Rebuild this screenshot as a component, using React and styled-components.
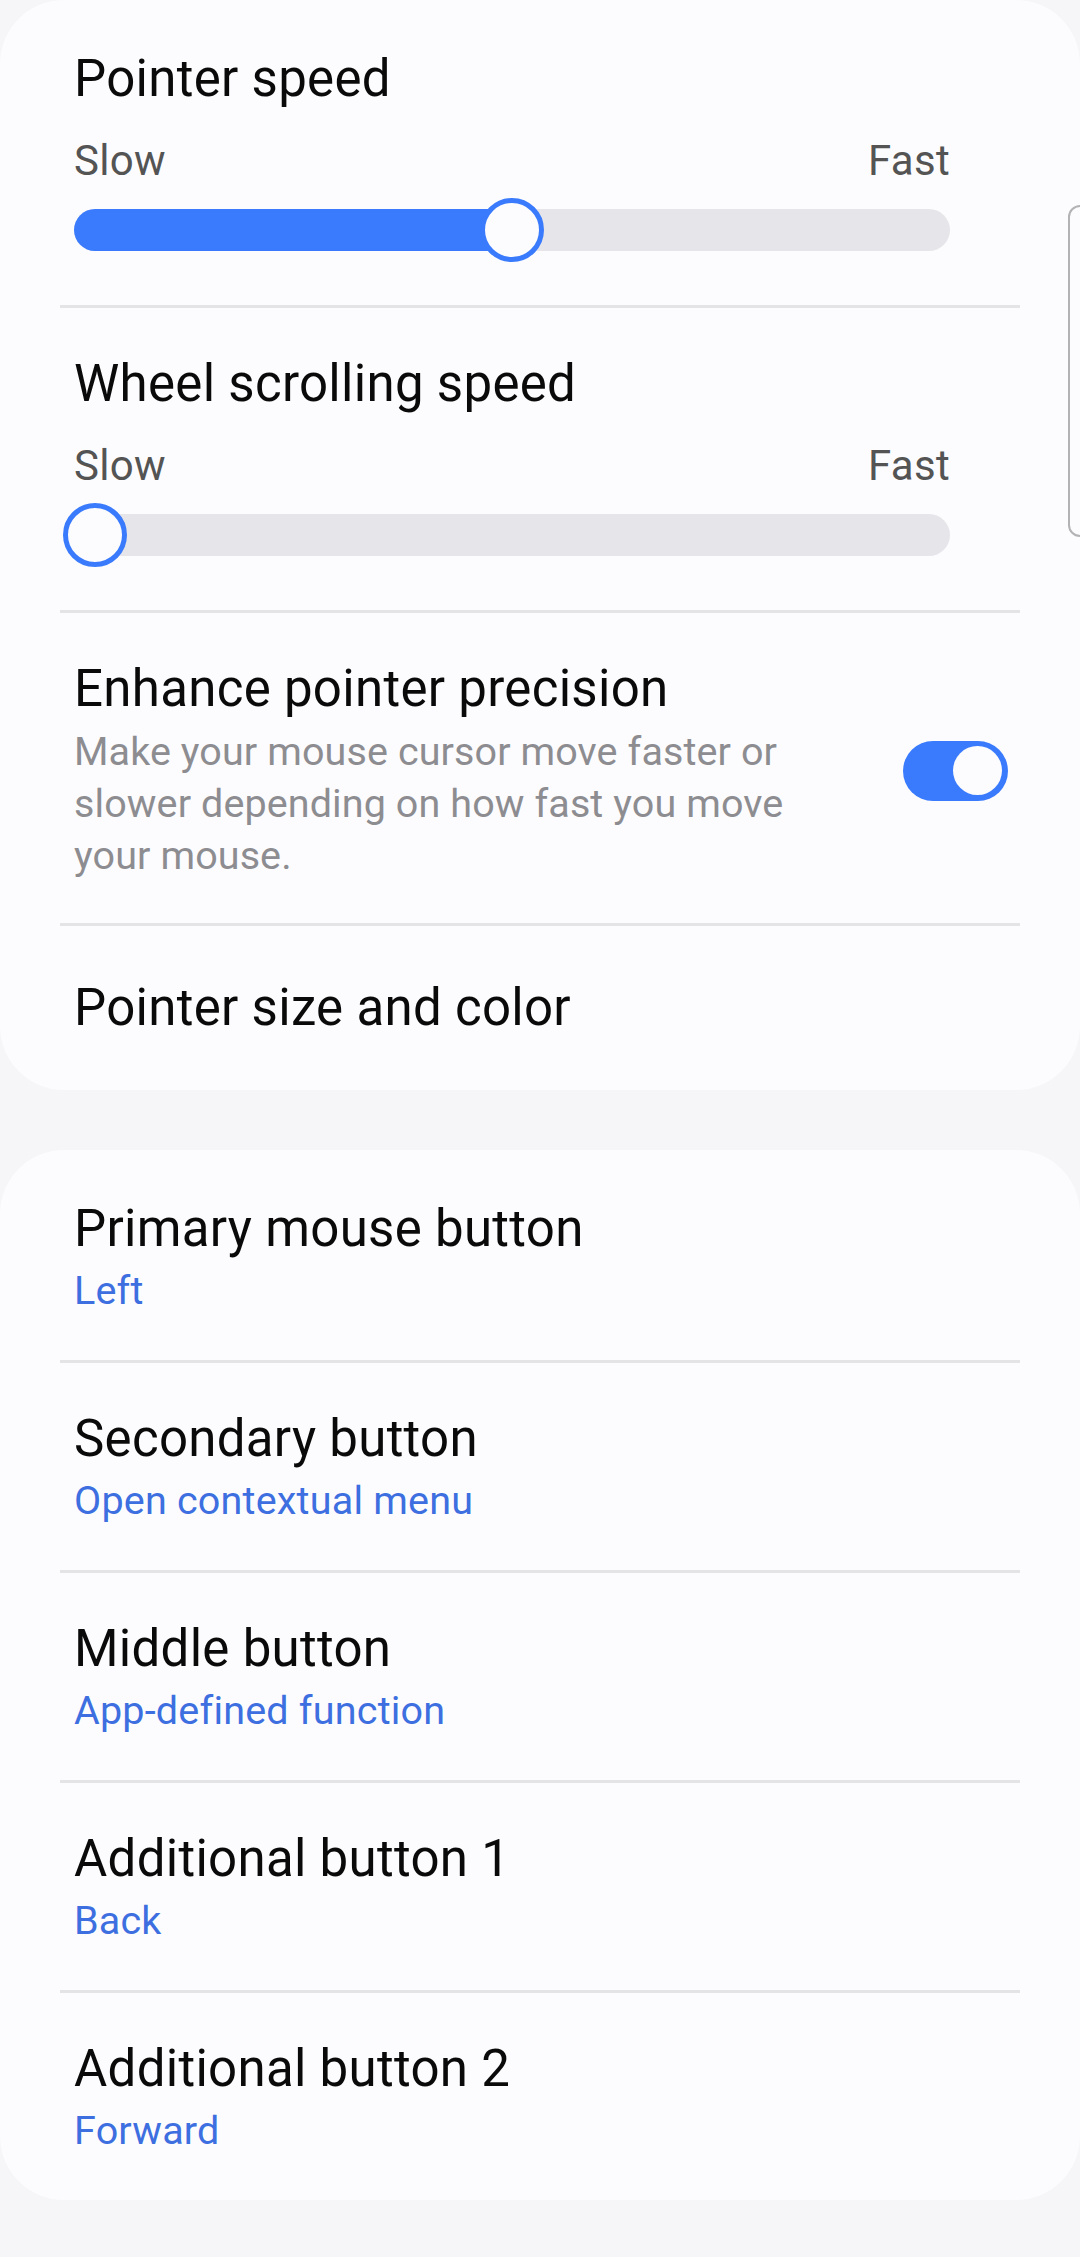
import React from "react";
import styled, { createGlobalStyle } from "styled-components";

const GlobalStyle = createGlobalStyle`
  html, body {
    margin: 0;
    padding: 0;
    background: #f6f6f8;
  }
  body {
    font-family: Roboto, "Noto Sans", "Liberation Sans", sans-serif;
    -webkit-font-smoothing: antialiased;
  }
`;

const Page = styled.div`
  position: relative;
  width: 1080px;
  min-height: 2257px;
  background: #f6f6f8;
  display: flex;
  flex-direction: column;
  gap: 60px;
  padding-bottom: 60px;
  box-sizing: border-box;
`;

const Card = styled.section`
  background: #fcfcfe;
  border-radius: 64px;
  padding: 3px 60px 0;
  display: flex;
  flex-direction: column;
`;

const Divider = styled.div`
  height: 3px;
  background: #e4e4e7;
`;

const Title = styled.div`
  font-size: 51px;
  line-height: 60px;
  color: #0a0a0a;
  letter-spacing: 0.3px;
`;

const SliderSection = styled.div`
  display: flex;
  flex-direction: column;
  padding: 46px 70px 43px 14px;
`;

const Labels = styled.div`
  display: flex;
  justify-content: space-between;
  margin-top: 27px;
  font-size: 42px;
  line-height: 50px;
  color: #545454;
  letter-spacing: 0.3px;
`;

const SliderBox = styled.div`
  margin-top: 12px;
  height: 64px;
  display: flex;
  align-items: center;
`;

const Track = styled.div`
  position: relative;
  flex: 1;
  height: 42px;
  border-radius: 21px;
  background: #e6e6ea;
`;

const Fill = styled.div`
  height: 100%;
  border-radius: 21px 0 0 21px;
  background: #3a7bfd;
`;

const Thumb = styled.div`
  position: absolute;
  top: 50%;
  width: 54px;
  height: 54px;
  border-radius: 50%;
  border: 5px solid #3a7bfd;
  background: #fcfcfe;
  transform: translate(-50%, -50%);
`;

const ToggleRow = styled.div`
  display: flex;
  align-items: center;
  gap: 40px;
  padding: 46px 12px 41px 14px;
`;

const TextColumn = styled.div`
  flex: 1;
  display: flex;
  flex-direction: column;
`;

const Description = styled.div`
  margin-top: 7px;
  max-width: 770px;
  font-size: 39.5px;
  line-height: 52px;
  color: #8d8d91;
  letter-spacing: 0.1px;
`;

const Switch = styled.div`
  width: 105px;
  height: 60px;
  box-sizing: border-box;
  padding: 5px 6px;
  border-radius: 30px;
  background: #3a7bfd;
  display: flex;
  align-items: center;
  justify-content: ${(p) => (p.$on ? "flex-end" : "flex-start")};
`;

const Knob = styled.div`
  width: 49px;
  height: 49px;
  border-radius: 50%;
  background: #fcfcfe;
`;

const PlainRow = styled.div`
  padding: 52px 14px;
`;

const ItemRow = styled.div`
  display: flex;
  flex-direction: column;
  padding: 46px 14px 44px;
`;

const Value = styled.div`
  margin-top: 7px;
  font-size: 39.5px;
  line-height: 50px;
  color: #3d6fe0;
  letter-spacing: 0.2px;
`;

const ScrollHint = styled.div`
  position: absolute;
  left: 1068px;
  top: 205px;
  width: 40px;
  height: 328px;
  border: 2px solid #b3b3b6;
  border-radius: 12px;
`;

function Slider({ title, value }) {
  const pos = `calc(21px + (100% - 42px) * ${value})`;
  return (
    <SliderSection>
      <Title>{title}</Title>
      <Labels>
        <span>Slow</span>
        <span>Fast</span>
      </Labels>
      <SliderBox>
        <Track>
          {value > 0 && <Fill style={{ width: pos }} />}
          <Thumb style={{ left: pos }} />
        </Track>
      </SliderBox>
    </SliderSection>
  );
}

const buttons = [
  { id: 1, title: "Primary mouse button", value: "Left" },
  { id: 2, title: "Secondary button", value: "Open contextual menu" },
  { id: 3, title: "Middle button", value: "App-defined function" },
  { id: 4, title: "Additional button 1", value: "Back" },
  { id: 5, title: "Additional button 2", value: "Forward" },
];

export default function App() {
  return (
    <>
      <GlobalStyle />
      <Page>
        <Card>
          <Slider title="Pointer speed" value={0.5} />
          <Divider />
          <Slider title="Wheel scrolling speed" value={0} />
          <Divider />
          <ToggleRow>
            <TextColumn>
              <Title>Enhance pointer precision</Title>
              <Description>
                Make your mouse cursor move faster or slower depending on how
                fast you move your mouse.
              </Description>
            </TextColumn>
            <Switch $on>
              <Knob />
            </Switch>
          </ToggleRow>
          <Divider />
          <PlainRow>
            <Title>Pointer size and color</Title>
          </PlainRow>
        </Card>
        <Card>
          {buttons.map((b, i) => (
            <React.Fragment key={b.id}>
              {i > 0 && <Divider />}
              <ItemRow>
                <Title>{b.title}</Title>
                <Value>{b.value}</Value>
              </ItemRow>
            </React.Fragment>
          ))}
        </Card>
        <ScrollHint />
      </Page>
    </>
  );
}
